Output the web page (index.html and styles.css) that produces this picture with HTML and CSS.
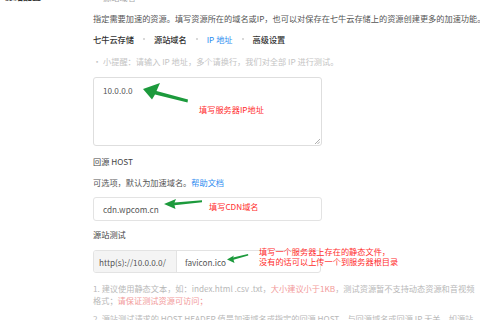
FILE: index.html
```html
<!DOCTYPE html>
<html lang="zh-CN">
<head>
<meta charset="utf-8">
<link rel="stylesheet" href="styles.css">
</head>
<body>
<div class="page">
  <div class="top-row">
    <div class="side-label">源站配置</div>
    <div class="top-val">源站域名</div>
  </div>
  <div class="main">
    <p class="desc">指定需要加速的资源。填写资源所在的域名或IP，也可以对保存在七牛云存储上的资源创建更多的加速功能。</p>
    <div class="tabs">
      <span class="tab">七牛云存储</span><span class="dot"></span>
      <span class="tab">源站域名</span><span class="dot"></span>
      <span class="tab active">IP 地址</span><span class="dot"></span>
      <span class="tab">高级设置</span>
    </div>
    <p class="hint">• 小提醒：请输入 IP 地址，多个请换行，我们对全部 IP 进行测试。</p>
    <div class="textarea">
      <span class="val">10.0.0.0</span>
      <svg class="grip" width="6" height="6" viewBox="0 0 6 6"><path d="M1 6L6 1M3.5 6L6 3.5" stroke="#999" stroke-width="0.8"/></svg>
    </div>
    <div class="label">回源 HOST</div>
    <p class="opt">可选项，默认为加速域名。<span class="link">帮助文档</span></p>
    <div class="input"><span class="val">cdn.wpcom.cn</span></div>
    <div class="label">源站测试</div>
    <div class="group">
      <div class="prefix">http(s)://10.0.0.0/</div>
      <div class="gval">favicon.ico</div>
    </div>
    <p class="note">1. 建议使用静态文本，如：index.html .csv .txt，<span class="warn">大小建议小于1KB</span>，测试资源暂不支持动态资源和音视频格式；<span class="warn">请保证测试资源可访问；</span></p>
    <p class="note note2">2. 源站测试请求的 HOST HEADER 值是加速域名或指定的回源 HOST，与回源域名或回源 IP 无关，如源站</p>
  </div>
  <div class="ann ann1">填写服务器IP地址</div>
  <div class="ann ann2">填写CDN域名</div>
  <div class="ann ann3">填写一个服务器上存在的静态文件，<br>没有的话可以上传一个到服务器根目录</div>
  <svg class="arrows" width="480" height="320" viewBox="0 0 480 320">
    <polygon fill="#1c9a3c" points="143,89 160,83 156.5,91 188,99.5 187.5,102.5 155,94.5 152,99.5"/>
    <polygon fill="#1c9a3c" points="164,204 176,199 174.5,202.5 202,200.3 202,202.3 174.5,205.2 175.5,209"/>
    <polygon fill="#1c9a3c" points="227,259.5 234,255.5 233,257.5 248,254 248.3,255.5 233.5,259.7 234.5,263"/>
  </svg>
</div>
</body>
</html>
```

FILE: styles.css
```css
* { box-sizing: border-box; }
html, body { margin: 0; padding: 0; }
body {
  width: 480px;
  height: 320px;
  overflow: hidden;
  background: #fff;
  font-family: "Noto Sans CJK SC", "Noto Sans", sans-serif;
  font-size: 8.2px;
  line-height: 12px;
  color: #555;
}
p { margin: 0; }
.page {
  position: relative;
  width: 480px;
  height: 320px;
  overflow: hidden;
}
.top-row {
  display: flex;
  margin-top: -9px;
  height: 12px;
}
.side-label {
  width: 103px;
  padding-left: 5px;
  font-weight: 700;
  color: #333;
  font-size: 9px;
}
.top-val { color: #aaa; }
.main {
  margin-left: 93px;
  width: 387px;
}
.desc { margin-top: 9px; color: #555; white-space: nowrap; }
.tabs {
  margin-top: 9px;
  display: flex;
  align-items: center;
  gap: 9px;
  height: 12px;
}
.tab { color: #333; font-weight: 500; }
.tab.active { color: #2d8cf0; font-weight: 400; }
.dot {
  width: 2px;
  height: 2px;
  border-radius: 50%;
  background: #ccc;
}
.hint { margin-top: 10px; color: #c4c4c4; }
.textarea {
  position: relative;
  margin-top: 10px;
  width: 229px;
  height: 69px;
  border: 1px solid #dedede;
  border-radius: 3px;
  padding: 6px 0 0 9px;
  color: #555;
}
.grip { position: absolute; right: 1px; bottom: 1px; }
.label { margin-top: 9px; color: #444; height: 12px; }
.opt { margin-top: 9px; color: #555; }
.link { color: #2d8cf0; }
.input {
  margin-top: 9px;
  width: 229px;
  height: 24px;
  border: 1px solid #e3e3e3;
  border-radius: 3px;
  padding-left: 9px;
  display: flex;
  align-items: center;
  color: #555;
}
.label + .group { margin-top: 10px; }
.input + .label { margin-top: 7px; }
.group {
  display: flex;
  width: 228px;
  height: 23px;
  border: 1px solid #e3e3e3;
  border-radius: 3px;
  overflow: hidden;
}
.prefix {
  width: 83px;
  background: #f4f4f4;
  border-right: 1px solid #e3e3e3;
  padding-left: 5px;
  display: flex;
  align-items: center;
  color: #555;
}
.gval {
  padding-left: 8px;
  display: flex;
  align-items: center;
  color: #555;
}
.note { margin-top: 9px; color: #b8b8b8; width: 385px; }
.note2 { margin-top: 6px; white-space: nowrap; }
.warn { color: #f29a9a; }
.ann {
  position: absolute;
  color: #ff2d2d;
  line-height: 10px;
  white-space: nowrap;
}
.ann1 { left: 199px; top: 104px; }
.ann2 { left: 209px; top: 201px; }
.ann3 { left: 259px; top: 246px; }
.arrows { position: absolute; left: 0; top: 0; pointer-events: none; }
```
